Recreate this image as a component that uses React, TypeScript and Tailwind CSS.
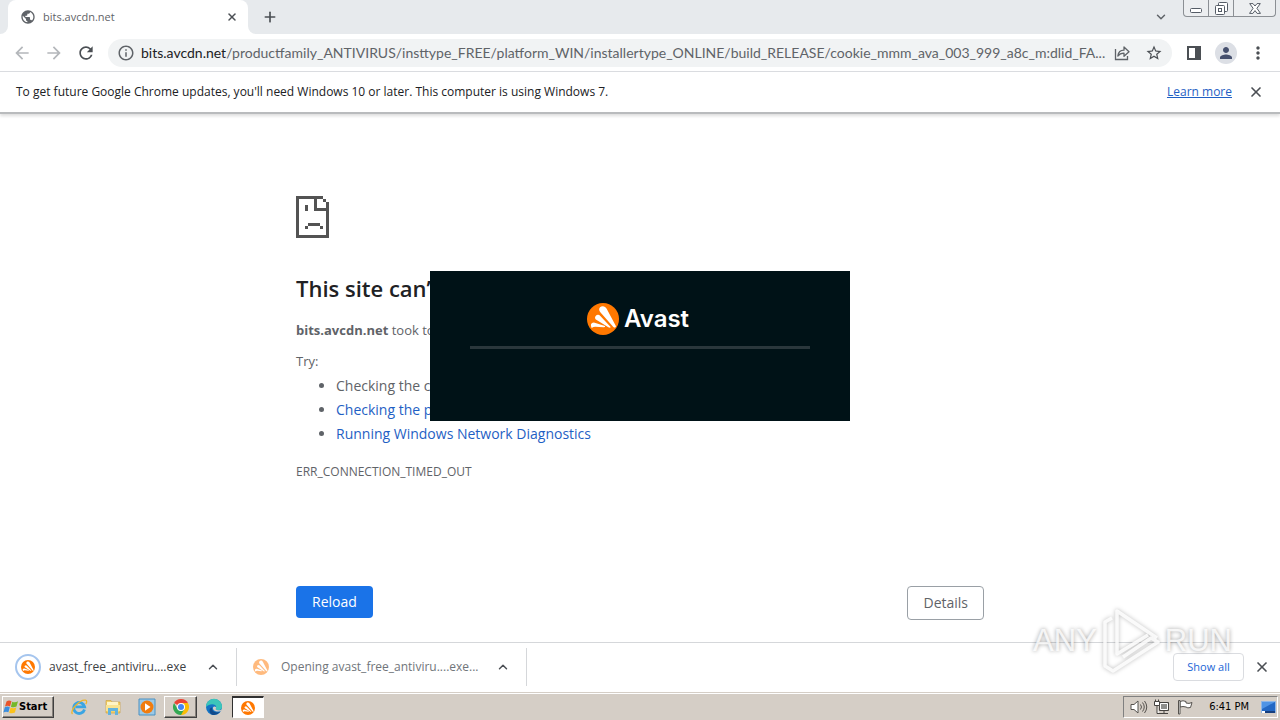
import type { ReactNode } from "react";
import { ChevronDown, ChevronUp, Plus, X } from "lucide-react";
import { MdArrowBack, MdArrowForward, MdInfoOutline, MdMoreVert, MdPerson, MdPublic, MdRefresh, MdStarBorder } from "react-icons/md";

const URL_PATH =
  "/productfamily_ANTIVIRUS/insttype_FREE/platform_WIN/installertype_ONLINE/build_RELEASE/cookie_mmm_ava_003_999_a8c_m:dlid_FA...";

function AvastMark({ className }: { className: string }) {
  return (
    <svg viewBox="0 0 96 96" className={className} aria-hidden="true">
      <circle cx="48" cy="48" r="48" fill="#ff7800" />
      <g fill="#fff">
        <path d="M39 13C45 7 55 9 59 17L87 70Q86 76 79 72L40 28C36 23 35 18 39 13Z" />
        <path d="M26 39C30 34 36 34 40 39L71 72Q70 76 64 73L29 51C23 48 23 43 26 39Z" />
        <path d="M12 64Q14 58 23 59L54 69Q56 73 50 73L25 71Q19 71 14 75Q11 69 12 64Z" />
      </g>
    </svg>
  );
}

function WindowButtons() {
  return (
    <div className="flex h-[17px] rounded-b border border-t-0 border-[#8b8f94] bg-[#eceef0]">
      <button aria-label="Minimize" className="flex w-[25px] items-end justify-center border-r border-[#8b8f94] pb-[3px]">
        <svg viewBox="0 0 12 5" className="h-[5px] w-3">
          <rect x=".5" y=".5" width="11" height="4" rx="1" fill="#fff" stroke="#555c66" />
        </svg>
      </button>
      <button aria-label="Restore" className="flex w-[25px] items-center justify-center border-r border-[#8b8f94]">
        <svg viewBox="0 0 13 13" className="size-[13px]" fill="#fff" stroke="#555c66">
          <rect x="3.500" y=".5" width="9" height="9" rx="1" />
          <rect x=".5" y="3.500" width="9" height="9" rx="1" />
          <rect x="3.500" y="6.500" width="3" height="3" />
        </svg>
      </button>
      <button aria-label="Close" className="flex w-[41px] items-center justify-center">
        <svg viewBox="0 0 12 11" className="h-[11px] w-3">
          <path d="M.7.6H4L6 3 8 .6h3.300L7.900 5.300l3.600 5.100H8.100L6 7.600l-2.100 2.800H.5l3.600-5.100Z" fill="#fff" stroke="#555c66" />
        </svg>
      </button>
    </div>
  );
}

function TabStrip() {
  return (
    <header className="flex h-[34px] shrink-0 bg-[#e7eaed]">
      <div className="w-2 shrink-0 bg-white">
        <div className="h-full rounded-br-lg bg-[#e7eaed]" />
      </div>
      <div className="flex w-60 items-center rounded-t-lg bg-white pr-2 pl-3">
        <MdPublic className="size-4 text-[#5f6368]" />
        <span className="ml-[7px] flex-1 text-[11px] text-[#5f6368]">bits.avcdn.net</span>
        <button aria-label="Close tab" className="flex size-4 items-center justify-center text-[#4b4f54]">
          <X className="size-3" strokeWidth={3} />
        </button>
      </div>
      <div className="w-2 shrink-0 bg-white">
        <div className="h-full rounded-bl-lg bg-[#e7eaed]" />
      </div>
      <button aria-label="New tab" className="flex w-7 items-center justify-center text-[#4b4f54]">
        <Plus className="size-4" strokeWidth={2.5} />
      </button>
      <div className="flex-1" />
      <button aria-label="Search tabs" className="mr-[15px] flex items-center text-[#5f6368]">
        <ChevronDown className="size-[14px]" strokeWidth={2.5} />
      </button>
      <div className="mr-1">
        <WindowButtons />
      </div>
    </header>
  );
}

function Toolbar() {
  return (
    <nav className="flex h-[38px] shrink-0 items-center border-b border-[#dadce0] bg-white pr-3 pl-3">
      <button aria-label="Back" className="text-[#b4b7bb]"><MdArrowBack className="size-5" /></button>
      <button aria-label="Forward" className="ml-3 text-[#b4b7bb]"><MdArrowForward className="size-5" /></button>
      <button aria-label="Reload page" className="ml-3 text-[#4b4f54]"><MdRefresh className="size-5" /></button>
      <div className="ml-3 flex h-7 min-w-0 flex-1 items-center rounded-full bg-[#f1f3f4] pr-[9px] pl-[9px]">
        <MdInfoOutline className="size-[18px] shrink-0 text-[#5f6368]" />
        <a href="#address" className="ml-[6px] min-w-0 flex-1 font-['Lato',sans-serif] text-[14px] whitespace-nowrap text-[#5f6368]">
          <span className="text-[#202124]">bits.avcdn.net</span>
          {URL_PATH}
        </a>
        <button aria-label="Share this page" className="ml-4 text-[#5f6368]">
          <svg viewBox="0 0 16 16" className="size-4" fill="none" stroke="currentColor" strokeWidth="1.300">
            <path d="M1.500 4v10.500h12V11" />
            <path d="M3.800 11C4.300 7.500 6.500 5.200 10 5.200V2l5 4.700-5 4.500V8.200C7.200 8.200 5.300 9 3.800 11Z" strokeLinejoin="round" />
          </svg>
        </button>
        <button aria-label="Bookmark this tab" className="ml-[15px] text-[#4b4f54]"><MdStarBorder className="size-[18px]" /></button>
      </div>
      <button aria-label="Side panel" className="ml-[15px]">
        <svg viewBox="0 0 14 14" className="size-[14px]">
          <path fill="#4b4f54" fillRule="evenodd" d="M0 0h14v14H0ZM2 2v10h6V2Z" />
        </svg>
      </button>
      <button aria-label="Profile" className="ml-[14px] flex size-[22px] items-center justify-center rounded-full bg-[#dcdfe5] text-[#46506e]">
        <MdPerson className="size-[18px]" />
      </button>
      <button aria-label="Menu" className="ml-[11px] text-[#4b4f54]"><MdMoreVert className="size-5" /></button>
    </nav>
  );
}

function UpdateBar() {
  return (
    <section className="relative flex h-[42px] shrink-0 items-center border-b-2 border-[#b9bbbd] bg-white px-4 text-[12px] shadow-[0_2px_3px_#dddddd]">
      <p className="flex-1 text-[#202124]">
        To get future Google Chrome updates, you&apos;ll need Windows 10 or later. This computer is using Windows 7.
      </p>
      <a href="#learn" className="text-[#1f5fc4] underline">Learn more</a>
      <button aria-label="Dismiss" className="ml-4 text-[#4b4f54]"><X className="size-4" strokeWidth={2.5} /></button>
    </section>
  );
}

function SadPage() {
  return (
    <svg viewBox="0 0 33 42" className="h-[42px] w-[33px]" shapeRendering="crispEdges" aria-hidden="true">
      <path
        fill="#535353"
        fillRule="evenodd"
        d="M0 0h27v3h3v3h3v36H0ZM3 3v36h27V15H18V3ZM21 3v9h9V6h-3V3ZM9 9h3v6H9ZM12 27h12v3H12ZM9 30h3v3H9ZM24 30h3v3h-3Z"
      />
    </svg>
  );
}

function ErrorPage() {
  return (
    <main className="min-h-0 flex-1 bg-white pt-[82px]">
      <div className="mx-auto max-w-[688px] text-[14px] leading-6 text-[#5f6368]">
        <SadPage />
        <h1 className="mt-[35px] text-[22px] leading-[30px] font-semibold text-[#202124]">This site can’t be reached</h1>
        <p className="mt-[15px] text-[13px] leading-6">
          <strong className="font-bold">bits.avcdn.net</strong> took too long to respond.
        </p>
        <p className="mt-[7px] text-[13px] leading-6">Try:</p>
        <ul className="mt-px list-disc pl-10">
          <li>Checking the connection</li>
          <li><a href="#proxy" className="text-[#1f5fc4]">Checking the proxy and the firewall</a></li>
          <li><a href="#diagnostics" className="text-[#1f5fc4]">Running Windows Network Diagnostics</a></li>
        </ul>
        <p className="mt-[14px] text-[12px] leading-6">ERR_CONNECTION_TIMED_OUT</p>
        <div className="mt-[102px] flex items-start justify-between">
          <button className="h-8 rounded bg-[#1a73e8] px-4 text-white">Reload</button>
          <button className="h-[34px] rounded border border-[#9aa0a6] px-[15px]">Details</button>
        </div>
      </div>
    </main>
  );
}

function InstallerSplash() {
  return (
    <div
      role="dialog"
      aria-label="Avast"
      className="absolute top-[271px] left-1/2 flex h-[150px] w-[420px] -translate-x-1/2 flex-col items-center bg-[#001217] px-10 pt-8"
    >
      <div className="flex items-center gap-[5px] pr-1">
        <AvastMark className="size-8" />
        <span className="font-['Inter',sans-serif] text-[24px] leading-8 font-semibold text-white">Avast</span>
      </div>
      <div className="mt-[11px] h-[3px] w-full bg-[#2a373c]" />
    </div>
  );
}

function DownloadShelf() {
  return (
    <footer className="flex h-[50px] shrink-0 items-center border-t border-[#d5d7da] bg-white pb-px text-[12px]">
      <div className="flex h-[38px] w-[237px] items-center border-r border-[#d5d7da] pl-[15px]">
        <span className="flex size-[26px] items-center justify-center rounded-full border-2 border-[#a5c5ee]">
          <AvastMark className="size-[14px]" />
        </span>
        <a href="#file" className="ml-2 flex-1 text-[#3c4043]">avast_free_antiviru....exe</a>
        <button aria-label="Download options" className="mr-4 text-[#4b4f54]"><ChevronUp className="size-[14px]" strokeWidth={2.5} /></button>
      </div>
      <div className="flex h-[38px] w-[290px] items-center border-r border-[#d5d7da] pl-4">
        <AvastMark className="size-4 opacity-50" />
        <span className="ml-3 flex-1 text-[#70757a]">Opening avast_free_antiviru....exe...</span>
        <button aria-label="Opening download options" className="mr-4 text-[#4b4f54]"><ChevronUp className="size-[14px]" strokeWidth={2.5} /></button>
      </div>
      <div className="flex-1" />
      <button className="h-7 w-[71px] rounded border border-[#dadce0] text-[11px] text-[#1a66d6]">Show all</button>
      <button aria-label="Close downloads" className="mr-[10px] ml-[10px] text-[#4b4f54]"><X className="size-4" strokeWidth={2.5} /></button>
    </footer>
  );
}

function Watermark() {
  return (
    <div className="pointer-events-none absolute right-12 bottom-[47px] flex items-center font-['Liberation_Sans',sans-serif] text-[31px] leading-none text-white/80 [text-shadow:0_0_4px_rgba(0,0,0,0.4)]">
      <span>ANY</span>
      <svg viewBox="0 0 60 66" className="mx-1 h-[66px] w-[60px] drop-shadow-[0_0_2px_rgba(0,0,0,0.3)]" fill="none" stroke="#fff" strokeOpacity=".85" strokeWidth="3.500" strokeLinejoin="round">
        <path d="M56 31 16 4V47L47 28" />
        <path d="M11 11 4 15V59L12 64 57 35 50 31 22 50" />
      </svg>
      <span>RUN</span>
    </div>
  );
}

function WindowsFlag() {
  return (
    <svg viewBox="0 0 16 16" className="size-4" aria-hidden="true">
      <path fill="#e8542a" d="M3.500 2.500Q6 .8 8.500 2.300L7 7.400Q4.500 6 2 7.500Z" />
      <path fill="#76b82a" d="M9.300 2.700Q12 4 15 2.200L13.500 7.500Q10.500 9 7.900 7.700Z" />
      <path fill="#3b8ede" d="M1.800 8.300Q4.300 6.900 6.800 8.300L5.400 13.300Q3 12 .4 13.400Z" />
      <path fill="#fbc21c" d="M7.600 8.600Q10.500 9.900 13.300 8.400L11.900 13.500Q9 15 6.200 13.700Z" />
    </svg>
  );
}

function TaskIcon({ label, children }: { label: string; children: ReactNode }) {
  return (
    <button aria-label={label} className="flex h-[22px] w-[34px] items-center justify-center">
      <svg viewBox="0 0 18 18" className="size-[18px]">{children}</svg>
    </button>
  );
}

function Taskbar() {
  return (
    <footer className="flex h-7 shrink-0 items-center border-t border-[#d5cec6] bg-[#d5cec6] pt-px pr-[2px] pl-[2px] text-black shadow-[inset_0_1px_white]">
      <button className="flex h-[22px] w-[52px] items-center border border-t-white border-r-[#404040] border-b-[#404040] border-l-white font-['DejaVu_Sans_Condensed','DejaVu_Sans',sans-serif] text-[11px] font-bold shadow-[inset_-1px_-1px_#86817b]">
        <WindowsFlag />
        Start
      </button>
      <div className="ml-2 flex items-center">
        <TaskIcon label="Internet Explorer">
          <path d="M14.500 11.500A5.500 5.500 0 1 1 14.600 8.800H5.500" fill="none" stroke="#3aa5e3" strokeWidth="2.800" />
          <path d="M2.500 16C-1 13 10 1 15.500 2.200c2 .5 1 3 .2 4" fill="none" stroke="#edb52b" strokeWidth="1.300" />
        </TaskIcon>
        <TaskIcon label="Windows Explorer">
          <path d="M2 4V2.500h5l1 1.500h8v11H2Z" fill="#f3d16a" stroke="#c99c34" strokeWidth=".6" />
          <path d="M3 4h11v3H3Z" fill="#fff4c5" />
          <path d="M2 7h14v6H2Z" fill="#f9e391" />
          <path d="M4 17v-7h10v7h-3v-4H7v4Z" fill="#62b3de" />
        </TaskIcon>
        <TaskIcon label="Windows Media Player">
          <path d="M1 1h16v16H1Z" fill="#9cc9e6" stroke="#4b91c2" />
          <circle cx="9" cy="9" r="6.500" fill="#f17c0e" />
          <path d="M7 5.200 12.500 9 7 12.800Z" fill="#fff" />
        </TaskIcon>
        <button aria-label="Google Chrome" className="flex h-[22px] w-[33px] items-center justify-center border border-t-white border-r-[#404040] border-b-[#404040] border-l-white shadow-[inset_-1px_-1px_#86817b]">
          <svg viewBox="0 0 16 16" className="size-4">
            <path d="M8 8 1.070 4A8 8 0 0 1 14.930 4Z" fill="#ea4335" />
            <path d="M8 8V4h6.930A8 8 0 0 1 8 16Z" fill="#fbbc04" />
            <path d="M8 8 11.460 10 8 16A8 8 0 0 1 1.070 4L4.540 10Z" fill="#34a853" />
            <circle cx="8" cy="8" r="4" fill="#fff" />
            <circle cx="8" cy="8" r="3" fill="#4285f4" />
          </svg>
        </button>
        <TaskIcon label="Microsoft Edge">
          <circle cx="9" cy="9" r="8" fill="#1474c4" />
          <path d="M1 9A8 8 0 0 1 17 8.500c.2 3-2.500 4-5 3.500-2-.5-1-1.500-.8-2.800C11.500 6 5 4.500 1 9Z" fill="#3cc6ba" />
          <path d="M7 9.500c-.5 3.500 3 6 8 4.500A8 8 0 0 1 7 16.800C3.500 14 4 10 7 9.500Z" fill="#114a8b" />
          <path d="M8 9.500c-.5 2.500 2 4.300 5.500 4 1.200-.1 2.200-.5 3-1L17.500 11c-1.500 1.300-3.500 1.500-5.500 1-2-.5-1-1.500-.8-2.800C10 8 8.500 8.300 8 9.500Z" fill="#d5cec6" />
        </TaskIcon>
        <button aria-label="Avast installer" className="ml-px flex h-[22px] w-8 items-center justify-center border border-t-2 border-t-[#303030] border-r-white border-b-white border-l-[#303030] bg-white">
          <AvastMark className="size-[14px]" />
        </button>
      </div>
      <div className="flex-1" />
      <div className="flex h-[22px] items-center border border-t-[#808080] border-r-white border-b-white border-l-[#808080] pr-px pl-[6px]">
        <svg viewBox="0 0 18 16" className="h-4 w-[18px]" fill="none" stroke="#55524e">
          <path d="M1 5.500h3L8 2v12L4 10.500H1Z" fill="#fff" />
          <path d="M10.500 5.500q2 2.500 0 5M12.500 3.500q3.500 4.500 0 9M14.500 2q4.500 6 0 12" />
        </svg>
        <svg viewBox="0 0 16 16" className="ml-[6px] size-4" fill="none" stroke="#45423f">
          <path d="M5.500 3.500h9v8h-9Z" fill="#8e8e8c" />
          <path d="M6.500 4.500h7v6h-7Z" stroke="#fff" />
          <path d="M5 14.500h9M10 12v2" />
          <path d="M.5 2.500h5v4h-5ZM1.500.5v2M4.500.5v2M3 6.500v8h2" fill="#fff" />
        </svg>
        <svg viewBox="0 0 18 16" className="ml-[7px] h-4 w-[18px]" fill="#fff" stroke="#55524e">
          <path d="M3 2.500q3-1.500 6 0v1.500q3 1 6-.5l-1.500 5q-3 1-4.500-.5-3-1-6 0Z" />
          <path d="M1.500 1.500h1.500v13.500H1.500Z" />
        </svg>
        <time className="ml-[14px] font-['DejaVu_Sans_Condensed','DejaVu_Sans',sans-serif] text-[11px]">6:41 PM</time>
        <button aria-label="Show desktop" className="ml-3">
          <svg viewBox="0 0 15 13" className="h-[13px] w-[15px]">
            <path d="M.5.5h14v11H.5Z" fill="#2368c4" stroke="#8db6e7" />
            <path d="M1 1h13L1 8Z" fill="#4f94e5" />
            <path d="M1 10h13v2H1Z" fill="#173f7e" />
            <path d="M1 10h3v2H1Z" fill="#fff" />
          </svg>
        </button>
      </div>
    </footer>
  );
}

export default function App() {
  return (
    <div className="relative flex min-h-screen flex-col overflow-hidden bg-white font-['Open_Sans','Noto_Sans',sans-serif]">
      <TabStrip />
      <Toolbar />
      <UpdateBar />
      <ErrorPage />
      <DownloadShelf />
      <Taskbar />
      <InstallerSplash />
      <Watermark />
    </div>
  );
}
